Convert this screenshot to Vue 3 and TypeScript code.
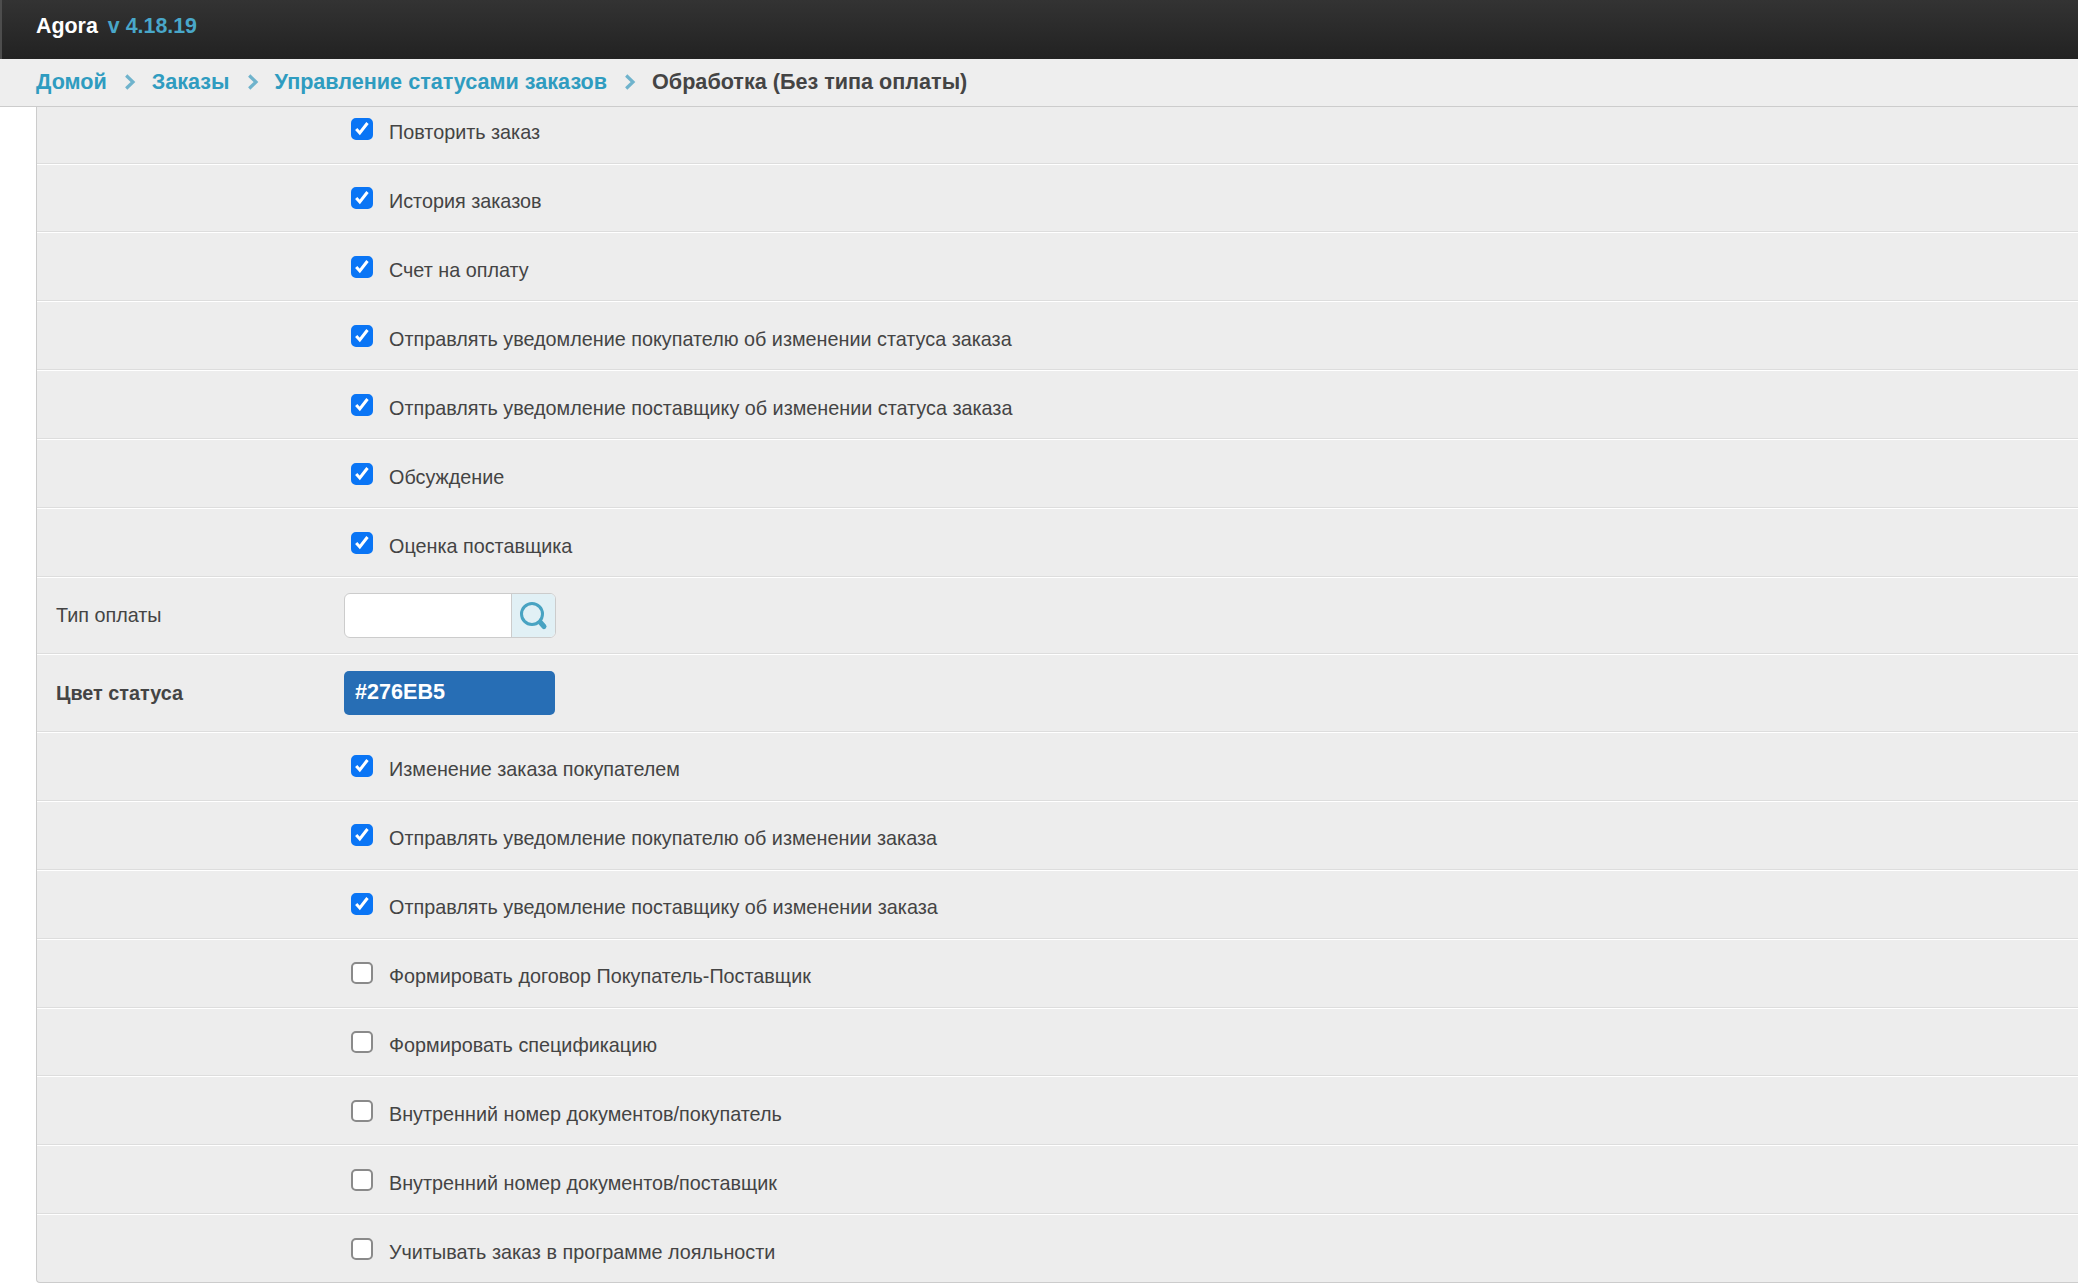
<script setup lang="ts">
interface Row { label: string; checked: boolean }
const crumbs: string[] = ['Домой', 'Заказы', 'Управление статусами заказов']
const top: Row[] = [
  { label: 'Повторить заказ', checked: true },
  { label: 'История заказов', checked: true },
  { label: 'Счет на оплату', checked: true },
  { label: 'Отправлять уведомление покупателю об изменении статуса заказа', checked: true },
  { label: 'Отправлять уведомление поставщику об изменении статуса заказа', checked: true },
  { label: 'Обсуждение', checked: true },
  { label: 'Оценка поставщика', checked: true },
]
const bottom: Row[] = [
  { label: 'Изменение заказа покупателем', checked: true },
  { label: 'Отправлять уведомление покупателю об изменении заказа', checked: true },
  { label: 'Отправлять уведомление поставщику об изменении заказа', checked: true },
  { label: 'Формировать договор Покупатель-Поставщик', checked: false },
  { label: 'Формировать спецификацию', checked: false },
  { label: 'Внутренний номер документов/покупатель', checked: false },
  { label: 'Внутренний номер документов/поставщик', checked: false },
  { label: 'Учитывать заказ в программе лояльности', checked: false },
]
</script>

<template>
  <div class="page">
    <header class="topbar">
      <span class="brand">Agora</span>
      <span class="version">v 4.18.19</span>
    </header>
    <nav class="crumbs">
      <template v-for="c in crumbs" :key="c">
        <a class="crumb">{{ c }}</a>
        <svg class="sep" width="12" height="18" viewBox="0 0 12 18"><path d="M2.2 2.5 L9 9 L2.2 15.5" fill="none" stroke="#6fb3cc" stroke-width="3.2"/></svg>
      </template>
      <span class="current">Обработка (Без типа оплаты)</span>
    </nav>
    <main class="panel">
      <div v-for="r in top" :key="r.label" class="row check-row">
        <span class="box" :class="{ on: r.checked }">
          <svg v-if="r.checked" width="18" height="18" viewBox="0 0 18 18"><path d="M3.2 9 L6.8 13 L14.5 3" fill="none" stroke="#fff" stroke-width="3"/></svg>
        </span>
        <span class="text">{{ r.label }}</span>
      </div>
      <div class="row field-row pay">
        <label class="lbl">Тип оплаты</label>
        <div class="lookup">
          <span class="lookup-input"></span>
          <span class="lookup-btn">
            <svg width="32" height="32" viewBox="0 0 32 32"><circle cx="14" cy="14" r="10.5" fill="none" stroke="#48a3c2" stroke-width="3"/><path d="M22.5 22.5 L26 26.5" stroke="#48a3c2" stroke-width="5" stroke-linecap="round"/></svg>
          </span>
        </div>
      </div>
      <div class="row field-row color">
        <label class="lbl strong">Цвет статуса</label>
        <div class="swatch">#276EB5</div>
      </div>
      <div v-for="r in bottom" :key="r.label" class="row check-row">
        <span class="box" :class="{ on: r.checked }">
          <svg v-if="r.checked" width="18" height="18" viewBox="0 0 18 18"><path d="M3.2 9 L6.8 13 L14.5 3" fill="none" stroke="#fff" stroke-width="3"/></svg>
        </span>
        <span class="text">{{ r.label }}</span>
      </div>
    </main>
  </div>
</template>

<style>
html, body { margin: 0; background: #fff; }
</style>

<style scoped>
.page {
  width: 2078px;
  height: 1286px;
  overflow: hidden;
  display: flex;
  flex-direction: column;
  font-family: "Liberation Sans", Arial, sans-serif;
  color: #444;
}
.topbar {
  height: 59px;
  flex: none;
  box-sizing: border-box;
  padding: 13px 0 0 34px;
  display: flex;
  align-items: flex-start;
  gap: 10px;
  background: linear-gradient(#333, #222);
  border-left: 2px solid #4d4d4d;
  font-weight: 700;
  font-size: 21.4px;
  line-height: 26px;
}
.brand { color: #fff; }
.version { color: #49a7c9; }
.crumbs {
  height: 48px;
  flex: none;
  box-sizing: border-box;
  padding: 0 0 2px 36px;
  display: flex;
  align-items: center;
  background: #eee;
  border-bottom: 1px solid #ccc;
  font-weight: 700;
  font-size: 21.6px;
}
.crumb { color: #2f9cc0; }
.sep { margin: 0 16px 0 17px; }
.current { color: #444; }
.panel {
  flex: 1;
  min-height: 0;
  margin: 0 0 3px 36px;
  background: #ededed;
  border-left: 1px solid #ccc;
  border-bottom: 1px solid #ccc;
  border-bottom-left-radius: 4px;
  display: flex;
  flex-direction: column;
}
.row {
  flex: none;
  box-sizing: border-box;
  display: flex;
  border-bottom: 1px solid #ddd;
  box-shadow: 0 1px 0 #fff;
}
.check-row {
  height: 68.9px;
  padding: 23.5px 0 0 314px;
  align-items: flex-start;
}
.check-row:first-child {
  height: 56.6px;
  padding-top: 11px;
}
.check-row:last-child {
  flex: 1;
  border-bottom: 0;
  box-shadow: none;
}
.box {
  width: 22px;
  height: 22px;
  box-sizing: border-box;
  flex: none;
  border: 2px solid #8a8a8a;
  border-radius: 5px;
  background: #fff;
  display: flex;
  align-items: center;
  justify-content: center;
}
.box.on {
  background: #0a75f5;
  border-color: #0a75f5;
}
.text {
  margin: 1px 0 0 16px;
  font-size: 19.8px;
  line-height: 26px;
}
.field-row { align-items: center; padding: 1.5px 0 0 19px; }
.pay { height: 77px; }
.color { height: 78px; }
.lbl { width: 288px; font-size: 19.8px; flex: none; }
.strong { font-weight: 700; }
.lookup {
  width: 212px;
  height: 45px;
  box-sizing: border-box;
  border: 1px solid #ccc;
  border-radius: 6px;
  overflow: hidden;
  display: flex;
  background: #fff;
}
.lookup-input { flex: 1; }
.lookup-btn {
  width: 44px;
  box-sizing: border-box;
  border-left: 1px solid #ccc;
  background: #e1f0f5;
  display: flex;
  align-items: center;
  justify-content: center;
}
.swatch {
  width: 211px;
  height: 44px;
  box-sizing: border-box;
  padding-left: 11px;
  background: #276eb5;
  border-radius: 5px;
  color: #fff;
  font-weight: 700;
  font-size: 21.6px;
  line-height: 42px;
}
</style>
